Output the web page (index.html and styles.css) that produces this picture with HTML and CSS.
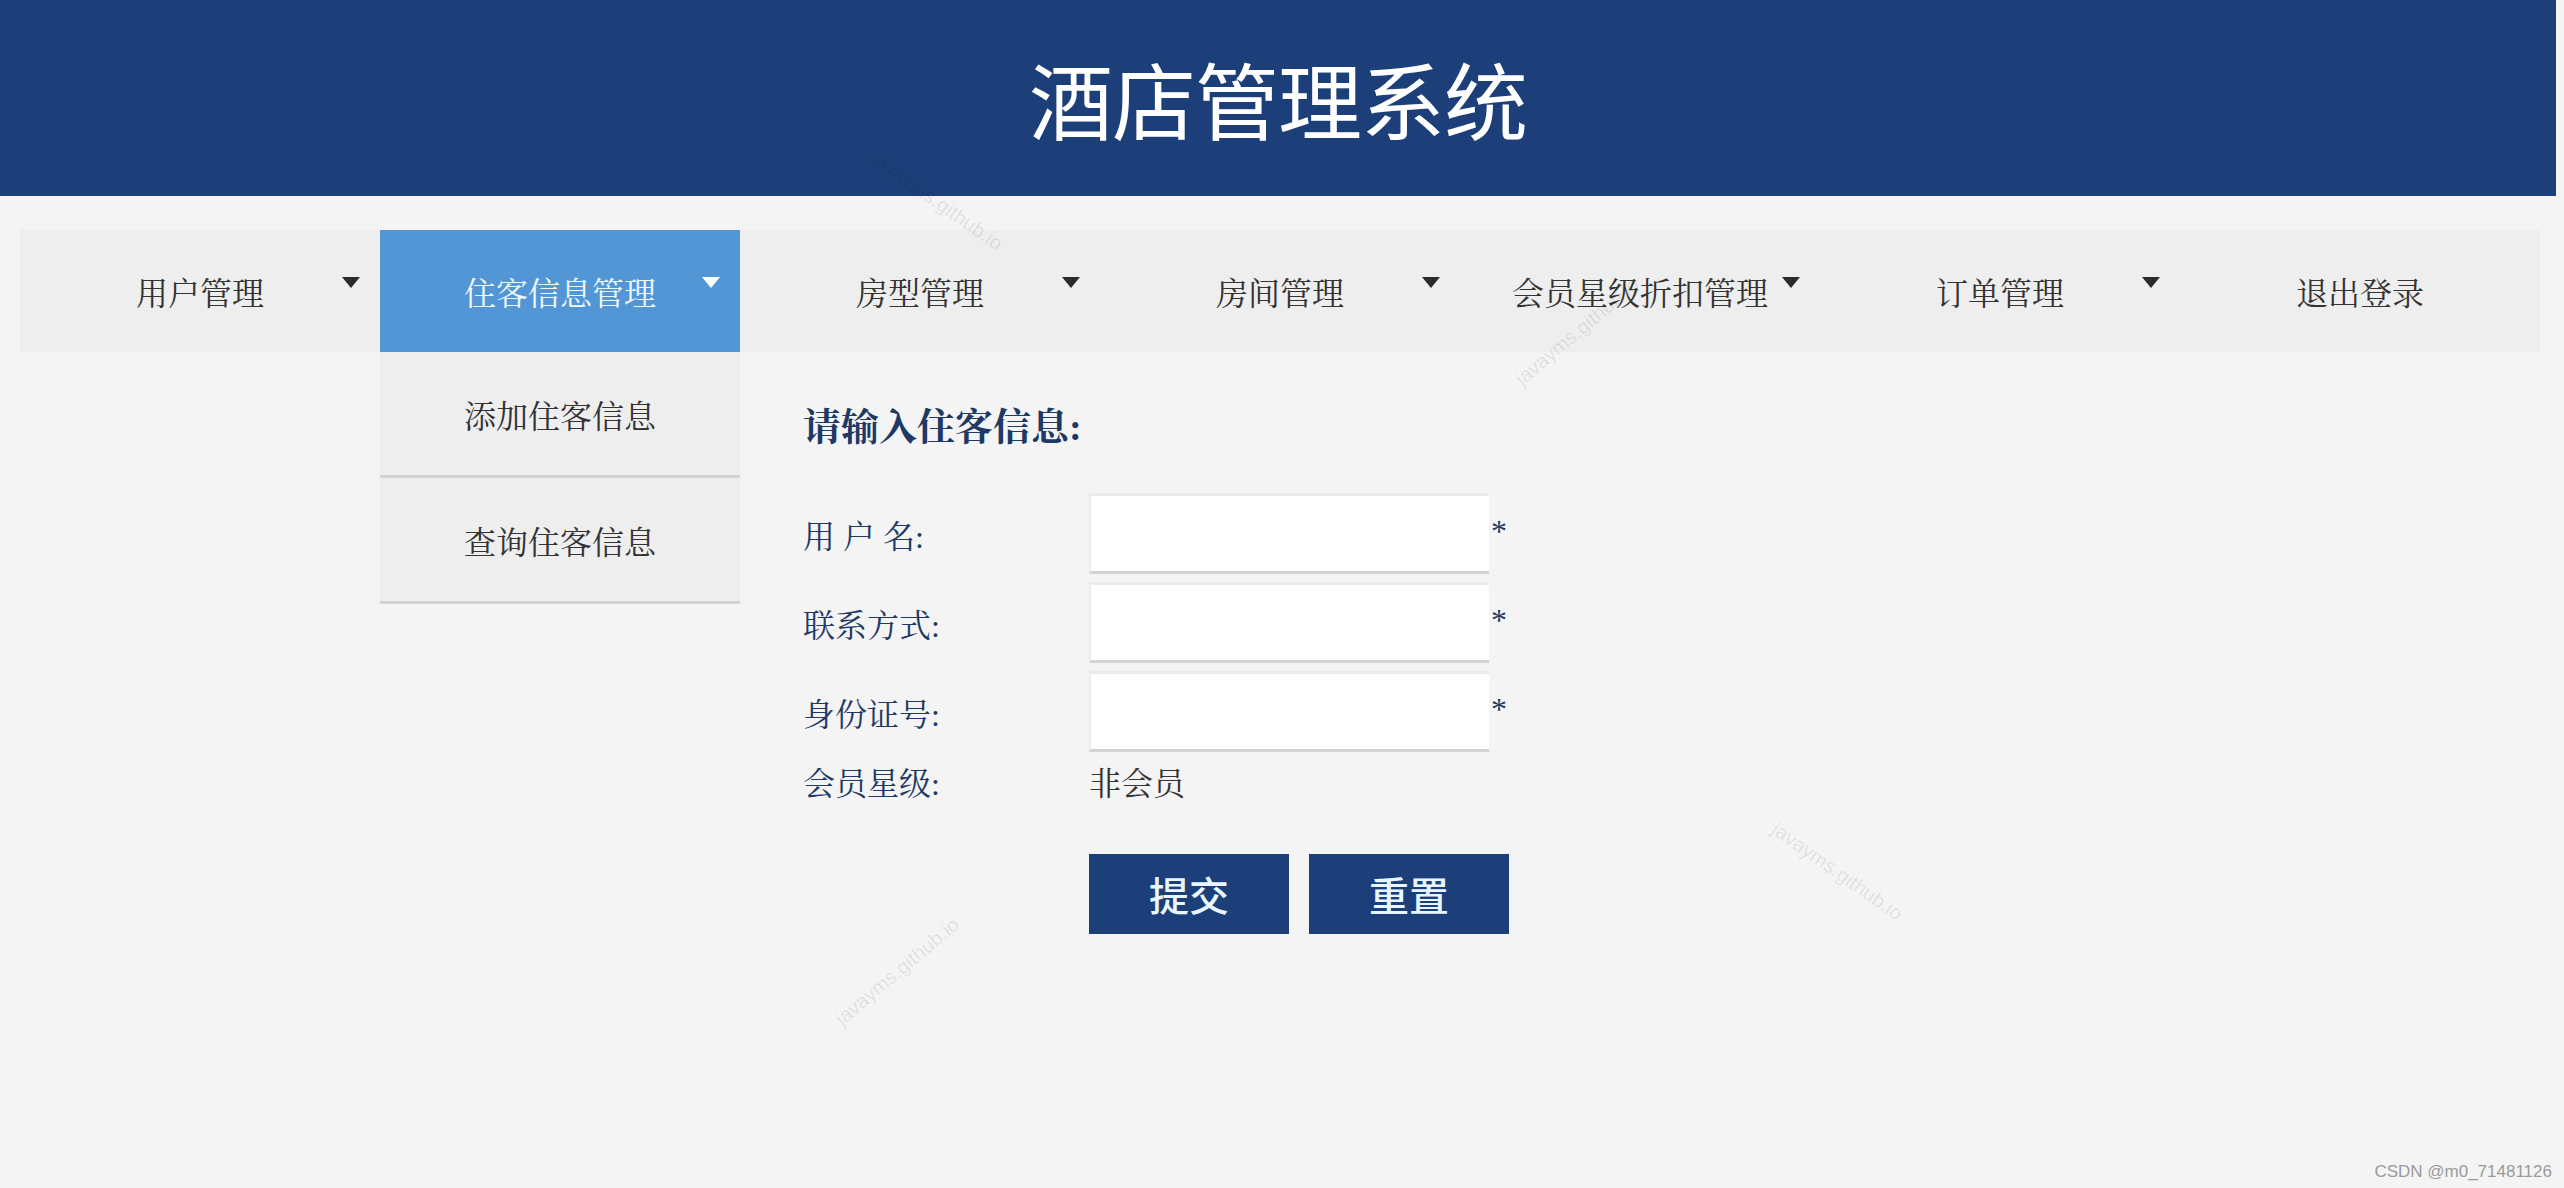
FILE: index.html
```html
<!DOCTYPE html>
<html>
<head>
  <meta charset="UTF-8">
  <title>酒店管理系统</title>
  <link rel="stylesheet" href="styles.css">
</head>
<body>
  <div id="header">
    <h1>酒店管理系统</h1>
  </div>

  <ul id="nav">
    <li class="nav-item has-menu"><span>用户管理</span><i class="caret"></i></li>
    <li class="nav-item has-menu active"><span>住客信息管理</span><i class="caret"></i>
      <ul class="dropdown">
        <li>添加住客信息</li>
        <li>查询住客信息</li>
      </ul>
    </li>
    <li class="nav-item has-menu"><span>房型管理</span><i class="caret"></i></li>
    <li class="nav-item has-menu"><span>房间管理</span><i class="caret"></i></li>
    <li class="nav-item has-menu"><span>会员星级折扣管理</span><i class="caret"></i></li>
    <li class="nav-item has-menu"><span>订单管理</span><i class="caret"></i></li>
    <li class="nav-item"><span>退出登录</span></li>
  </ul>

  <div id="content">
    <h2 class="form-title">请输入住客信息:</h2>
    <form class="guest-form">
      <label class="field-label">用 户 名:</label>
      <input type="text" class="field-input">
      <span class="required">*</span>

      <label class="field-label">联系方式:</label>
      <input type="text" class="field-input">
      <span class="required">*</span>

      <label class="field-label">身份证号:</label>
      <input type="text" class="field-input">
      <span class="required">*</span>

      <label class="field-label level-label">会员星级:</label>
      <span class="level-value">非会员</span>
      <span></span>

      <div class="form-buttons">
        <button type="button" class="btn">提交</button>
        <button type="reset" class="btn">重置</button>
      </div>
    </form>
  </div>

  <!-- 截图上的水印 -->
  <span class="wm wm1">javayms.github.io</span>
  <span class="wm wm2">javayms.github.io</span>
  <span class="wm wm3">javayms.github.io</span>
  <span class="wm wm4">javayms.github.io</span>
  <span class="csdn">CSDN @m0_71481126</span>
</body>
</html>
```

FILE: styles.css
```css
html {
  background-color: #f4f4f4;
}
body {
  margin: 0;
  min-height: 1188px;
  position: relative;
  background-color: #f4f4f4;
  font-family: 'Liberation Serif', 'Noto Serif CJK SC', 'Noto Sans CJK SC', serif;
  color: #333;
  overflow: hidden;
}

#header {
  height: 196px;
  margin-right: 8px;
  background-color: #1c3f7a;
  display: flex;
  align-items: center;
  justify-content: center;
}
#header h1 {
  margin: 0;
  font-family: 'Noto Sans CJK SC', sans-serif;
  font-weight: normal;
  font-size: 84px;
  line-height: 1;
  color: #ffffff;
  letter-spacing: -1px;
}

#nav {
  list-style: none;
  margin: 34px 0 0 20px;
  padding: 0;
  width: 2520px;
  height: 122px;
  display: flex;
  background-color: #eeeeee;
}
.nav-item {
  width: 360px;
  position: relative;
  display: flex;
  align-items: center;
  justify-content: center;
  font-size: 32px;
  color: #333;
}
.nav-item.active {
  background-color: #5296d5;
  color: #eef8ff;
}
.caret {
  position: absolute;
  top: 47px;
  right: 20px;
  width: 0;
  height: 0;
  border-left: 9px solid transparent;
  border-right: 9px solid transparent;
  border-top: 11px solid #2a2a2a;
}
.nav-item.active .caret {
  border-top-color: #ffffff;
}

.dropdown {
  list-style: none;
  margin: 0;
  padding: 0;
  position: absolute;
  top: 100%;
  left: 0;
  width: 360px;
  z-index: 5;
}
.dropdown li {
  height: 123px;
  border-bottom: 3px solid #d2d2d2;
  background-color: #eeeeee;
  display: flex;
  align-items: center;
  justify-content: center;
  font-size: 32px;
  color: #333;
}

#content {
  padding: 53px 0 0 803px;
}
.form-title {
  margin: 0 0 44px 0;
  font-size: 38px;
  line-height: 44px;
  font-weight: bold;
  color: #1e3a64;
}

.guest-form {
  display: grid;
  grid-template-columns: 286px 400px auto;
  row-gap: 8px;
  align-items: center;
}
.field-label {
  font-size: 32px;
  color: #1e3a64;
  white-space: pre;
}
.field-input {
  box-sizing: border-box;
  width: 400px;
  height: 81px;
  margin: 0;
  padding: 0 10px;
  background-color: #ffffff;
  border: none;
  border-top: 3px solid #ebebeb;
  border-left: 2px solid #ececec;
  border-bottom: 3px solid #d3d3d3;
  outline: none;
  font-size: 28px;
}
.required {
  align-self: start;
  padding: 22px 0 0 2px;
  font-size: 32px;
  line-height: 32px;
  color: #1e3a64;
}
.level-label,
.level-value {
  margin-top: -2px;
}
.level-value {
  font-size: 32px;
  color: #333;
}

.form-buttons {
  grid-column: 2 / 4;
  display: flex;
  gap: 20px;
  margin-top: 42px;
}
.btn {
  width: 200px;
  height: 80px;
  border: none;
  padding: 0;
  background-color: #1c3f7a;
  color: #e8f6ff;
  font-family: 'Noto Sans CJK SC', sans-serif;
  font-weight: 500;
  font-size: 40px;
  cursor: pointer;
}

.wm {
  position: absolute;
  font-family: 'Liberation Sans', sans-serif;
  font-size: 20px;
  color: rgba(0, 0, 0, 0.09);
  white-space: nowrap;
  pointer-events: none;
}
.wm1 { left: 860px; top: 190px; transform: rotate(35deg); }
.wm2 { left: 1500px; top: 320px; transform: rotate(-40deg); }
.wm3 { left: 1760px; top: 860px; transform: rotate(35deg); }
.wm4 { left: 820px; top: 960px; transform: rotate(-40deg); }

.csdn {
  position: absolute;
  right: 12px;
  bottom: 6px;
  font-family: 'Liberation Sans', sans-serif;
  font-size: 17px;
  color: #9a9a9a;
}
```
